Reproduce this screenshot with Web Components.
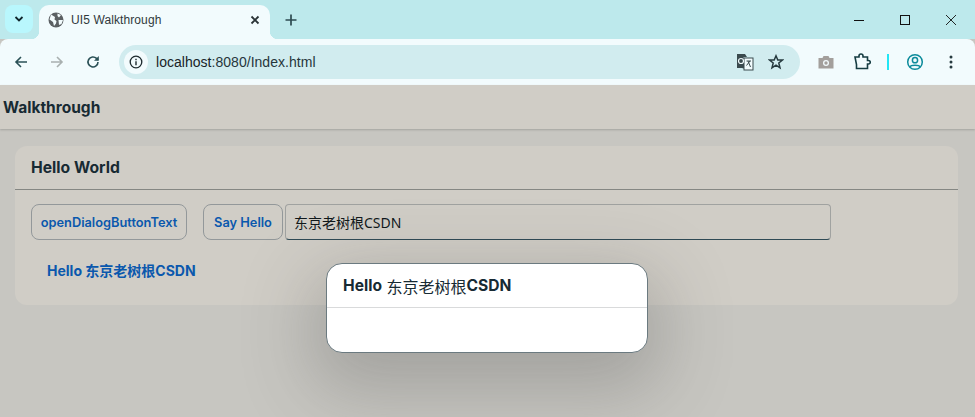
<!DOCTYPE html>
<html>
<head>
<meta charset="utf-8">
<title>UI5 Walkthrough</title>
<style>
  html, body { margin: 0; height: 100%; overflow: hidden; }
  body { width: 975px; height: 417px; display: flex; flex-direction: column; background: #c7c6c1; font-family: Inter, "Noto Sans CJK SC", sans-serif; position: relative; }
</style>
</head>
<body>
<browser-tabs></browser-tabs>
<browser-toolbar></browser-toolbar>
<app-header>Walkthrough</app-header>
<app-panel heading="Hello World">
  <div style="display:flex;align-items:center">
    <ui-button style="width:156px;margin-right:16px">openDialogButtonText</ui-button>
    <ui-button style="width:80px;margin-right:2px">Say Hello</ui-button>
    <ui-input value="东京老树根CSDN"></ui-input>
  </div>
  <app-message>Hello 东京老树根CSDN</app-message>
</app-panel>
<app-dialog><b>Hello</b> 东京老树根<b>CSDN</b></app-dialog>

<script>
class BrowserTabs extends HTMLElement {
    constructor() {
        super();
        this.attachShadow({ mode: 'open' });
        this.shadowRoot.innerHTML = `
            <style>
                :host { display: flex; height: 39px; background: #bde9ec; align-items: flex-end; flex: none; color: #1f2f33; padding-right: 1px; }
                .menu { width: 28px; height: 28px; margin: 0 0 6px 5px; border-radius: 8px; background: #b9f7fd; display: flex; align-items: center; justify-content: center; flex: none; }
                .tab { width: 231px; height: 34px; margin-left: 6px; background: #f2fbfd; border-radius: 10px 10px 0 0; display: flex; align-items: center; box-sizing: border-box; padding: 0 0 4px 9px; position: relative; font: 12px "Liberation Sans", Arial, sans-serif; color: #30393c; flex: none; }
                .tab::before, .tab::after { content: ""; position: absolute; bottom: 0; width: 8px; height: 8px; }
                .tab::before { left: -8px; background: radial-gradient(circle at 0 0, transparent 8px, #f2fbfd 8.5px); }
                .tab::after { right: -8px; background: radial-gradient(circle at 100% 0, transparent 8px, #f2fbfd 8.5px); }
                .title { margin-left: 7px; flex: 1; letter-spacing: .1px; }
                .x { margin-right: 10px; display: flex; }
                .plus { margin: 0 0 13px 15px; display: flex; }
                .spacer { flex: 1; }
                .win { width: 46px; height: 39px; display: flex; align-items: center; justify-content: center; }
            </style>
            <div class="menu"><svg width="10" height="8" viewBox="0 0 10 8"><path d="M1.5 2 5 5.5 8.500 2" fill="none" stroke="#10262c" stroke-width="1.800"/></svg></div>
            <div class="tab">
                <svg width="16" height="16" viewBox="0 0 16 16"><circle cx="8" cy="8" r="7.500" fill="#5b6063"/><path d="M3 2.500 7 5 6.500 7.500 8.500 9 8 11.500 6 14 5 10 1.500 7.500ZM9.500 1.500 13 3 11 5.500 9.500 4ZM10.500 8H15L13.500 12 11 13Z" fill="#f2fbfd"/></svg>
                <span class="title">UI5 Walkthrough</span>
                <span class="x"><svg width="10" height="10" viewBox="0 0 10 10"><path d="M1.500 1.500 8.500 8.500M8.500 1.500 1.500 8.500" stroke="#2a3336" stroke-width="1.800"/></svg></span>
            </div>
            <span class="plus"><svg width="12" height="12" viewBox="0 0 12 12"><path d="M6 .5V11.500M.5 6H11.500" stroke="#2d4a50" stroke-width="1.700"/></svg></span>
            <span class="spacer"></span>
            <span class="win"><svg width="10" height="10" viewBox="0 0 10 10"><path d="M0 5.500H10" stroke="#111" stroke-width="1"/></svg></span>
            <span class="win"><svg width="10" height="10" viewBox="0 0 10 10"><rect x=".5" y=".5" width="9" height="9" fill="none" stroke="#111"/></svg></span>
            <span class="win"><svg width="10" height="10" viewBox="0 0 10 10"><path d="M0 0 10 10M10 0 0 10" stroke="#111" stroke-width=".9"/></svg></span>
        `;
    }
}

class BrowserToolbar extends HTMLElement {
    constructor() {
        super();
        this.attachShadow({ mode: 'open' });
        this.shadowRoot.innerHTML = `
            <style>
                :host { display: flex; align-items: center; height: 46px; background: #f2fbfd; flex: none; box-sizing: border-box; padding: 0 0 1px 9px; border-radius: 8px 8px 0 0; }
                .btn { width: 24px; height: 24px; display: flex; align-items: center; justify-content: center; flex: none; }
                .nav { margin-right: 12px; }
                .omni { width: 681px; height: 34px; border-radius: 17px; background: #d1ecef; display: flex; align-items: center; flex: none; box-sizing: border-box; padding: 0 16px 0 5px; }
                .info { width: 24px; height: 24px; border-radius: 50%; background: #f2fbfd; display: flex; align-items: center; justify-content: center; flex: none; }
                .url { margin-left: 8px; flex: 1; font: 14px "Liberation Sans", Arial, sans-serif; color: #26363c; letter-spacing: .03px; }
                .url b { font-weight: normal; color: #182327; }
                .sep { width: 2px; height: 16px; background: #22e6f5; margin: 0 14px 0 13px; flex: none; }
            </style>
            <span class="btn nav"><svg width="14" height="14" viewBox="0 0 14 14"><path d="M13 7H2M7 2 2 7 7 12" fill="none" stroke="#2b5157" stroke-width="1.600"/></svg></span>
            <span class="btn nav"><svg width="14" height="14" viewBox="0 0 14 14"><path d="M1 7H12M7 2 12 7 7 12" fill="none" stroke="#a9b0b0" stroke-width="1.600"/></svg></span>
            <span class="btn"><svg width="14" height="14" viewBox="0 0 14 14"><path d="M12 7A5 5 0 1 1 10.500 3.400L12 5" fill="none" stroke="#2b5157" stroke-width="1.600"/><path d="M12.800 1V5.800H8Z" fill="#2b5157"/></svg></span>
            <div class="omni" style="margin-left:14px">
                <span class="info"><svg width="14" height="14" viewBox="0 0 14 14"><circle cx="7" cy="7" r="5.800" fill="none" stroke="#1d2a2e" stroke-width="1.300"/><path d="M7 6.300V10.200M7 3.800V5.200" stroke="#1d2a2e" stroke-width="1.400"/></svg></span>
                <span class="url"><b>localhost</b>:8080/Index.html</span>
                <svg width="18" height="18" viewBox="0 0 18 18" style="margin-right:14px"><path d="M1 1H9L11 4H7.500L9 16 6 15H1Z" fill="#3a4a4e"/><rect x="8" y="5" width="9" height="12" fill="#f2fbfd" stroke="#3a4a4e"/><circle cx="5" cy="8" r="2.500" fill="none" stroke="#f2fbfd" stroke-width="1.200"/><path d="M10.500 8H15M12 8 14.500 14M14 8 10.500 12.500" stroke="#3a4a4e" fill="none"/></svg>
                <svg width="16" height="16" viewBox="0 0 16 16"><path d="M8 1.800 9.800 6H14.500L10.800 9 12 13.800 8 11.200 4 13.800 5.200 9 1.500 6H6.200Z" fill="none" stroke="#263a3f" stroke-width="1.500"/></svg>
            </div>
            <span class="btn" style="margin-left:14px"><svg width="16" height="14" viewBox="0 0 16 14"><path d="M.5 3H4.500L5.500 1H10.500L11.500 3H15.500V13.500H.5Z" fill="#a39f9c"/><circle cx="8" cy="8" r="3" fill="#f2fbfd"/><circle cx="8" cy="8" r="1.700" fill="#a39f9c"/></svg></span>
            <span class="btn" style="margin-left:12px"><svg width="18" height="18" viewBox="0 0 18 18"><path d="M2 4H6V3A1.500 1.500 0 0 1 10 3V4H14.500V7.500H15.500A1.500 1.500 0 0 1 15.500 11H14.500V15.500H3.500V11.500L2 4Z" fill="none" stroke="#163c42" stroke-width="1.600"/></svg></span>
            <span class="sep"></span>
            <span class="btn"><svg width="18" height="18" viewBox="0 0 18 18"><circle cx="9" cy="9" r="7.300" fill="none" stroke="#0c8b9b" stroke-width="1.500"/><circle cx="9" cy="7.200" r="2.600" fill="none" stroke="#0c8b9b" stroke-width="1.500"/><path d="M3.800 14C5 11.500 13 11.500 14.200 14" fill="none" stroke="#0c8b9b" stroke-width="1.500"/></svg></span>
            <span class="btn" style="margin-left:12px"><svg width="4" height="14" viewBox="0 0 4 14"><circle cx="2" cy="2" r="1.500" fill="#263a3f"/><circle cx="2" cy="7" r="1.500" fill="#263a3f"/><circle cx="2" cy="12" r="1.500" fill="#263a3f"/></svg></span>
        `;
    }
}

class AppHeader extends HTMLElement {
    constructor() {
        super();
        this.attachShadow({ mode: 'open' });
        this.shadowRoot.innerHTML = `
            <style>
                :host { display: flex; align-items: center; height: 44px; background: #d0cdc6; box-shadow: 0 1px 2px rgba(0,0,0,.18); flex: none; padding-left: 3px; font-size: 15.500px; font-weight: 700; color: #172a33; box-sizing: border-box; position: relative; }
            </style>
            <slot></slot>
        `;
    }
}

class AppPanel extends HTMLElement {
    constructor() {
        super();
        this.attachShadow({ mode: 'open' });
        this.shadowRoot.innerHTML = `
            <style>
                :host { display: block; width: 943px; height: 159px; margin: 17px 0 0 15px; background: #d0cdc6; border-radius: 12px; flex: none; }
                .head { height: 43px; border-bottom: 1px solid #858783; box-sizing: content-box; display: flex; align-items: center; padding-left: 16px; font-size: 15.700px; font-weight: 700; color: #172a33; }
                .body { padding: 14px 16px 0; }
            </style>
            <div class="head"></div>
            <div class="body"><slot></slot></div>
        `;
        this.shadowRoot.querySelector('.head').textContent = this.getAttribute('heading');
    }
}

class UiButton extends HTMLElement {
    constructor() {
        super();
        this.attachShadow({ mode: 'open' });
        this.shadowRoot.innerHTML = `
            <style>
                :host { display: flex; align-items: center; justify-content: center; height: 36px; box-sizing: border-box; border: 1px solid #93989a; border-radius: 8px; font-size: 12.800px; font-weight: 600; color: #0a58ad; flex: none; white-space: nowrap; }
            </style>
            <slot></slot>
        `;
    }
}

class UiInput extends HTMLElement {
    constructor() {
        super();
        this.attachShadow({ mode: 'open' });
        this.shadowRoot.innerHTML = `
            <style>
                :host { display: flex; align-items: center; width: 546px; height: 36px; box-sizing: border-box; border: 1px solid #a0a2a0; border-bottom: 1px solid #2f4a55; border-radius: 4px; padding-left: 8px; font-family: "Noto Sans", "Noto Sans CJK SC", sans-serif; font-size: 14px; color: #10181b; flex: none; }
            </style>
            <span></span>
        `;
        this.shadowRoot.querySelector('span').textContent = this.getAttribute('value');
    }
}

class AppMessage extends HTMLElement {
    constructor() {
        super();
        this.attachShadow({ mode: 'open' });
        this.shadowRoot.innerHTML = `
            <style>
                :host { display: block; margin: 21px 0 0 16px; font-size: 14px; line-height: 20px; font-weight: 700; color: #0a58ad; }
            </style>
            <slot></slot>
        `;
    }
}

class AppDialog extends HTMLElement {
    constructor() {
        super();
        this.attachShadow({ mode: 'open' });
        this.shadowRoot.innerHTML = `
            <style>
                :host { display: block; position: absolute; left: 326px; top: 263px; width: 322px; height: 90px; box-sizing: border-box; background: #fff; border: 1px solid #6b7a80; border-radius: 16px; box-shadow: 0 24px 70px 14px rgba(60,62,60,.26); }
                .head { height: 43px; border-bottom: 1px solid #d9dadb; display: flex; align-items: center; padding-left: 16px; font-size: 16px; color: #172a33; white-space: pre; }
                ::slotted(b) { font-size: 15.600px; }
            </style>
            <div class="head"><slot></slot></div>
        `;
    }
}

customElements.define('browser-tabs', BrowserTabs);
customElements.define('browser-toolbar', BrowserToolbar);
customElements.define('app-header', AppHeader);
customElements.define('app-panel', AppPanel);
customElements.define('ui-button', UiButton);
customElements.define('ui-input', UiInput);
customElements.define('app-message', AppMessage);
customElements.define('app-dialog', AppDialog);
</script>
</body>
</html>
